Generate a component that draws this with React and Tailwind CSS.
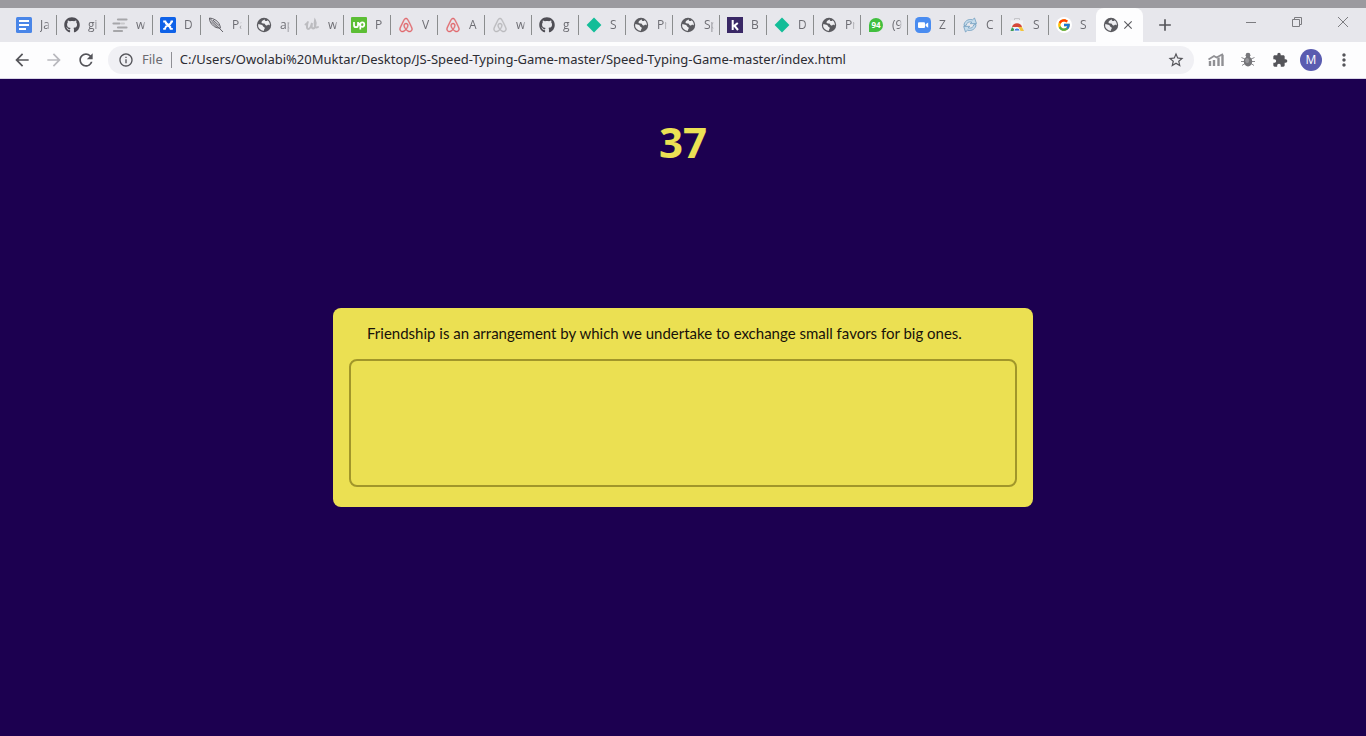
import React from "react";
import { FaAirbnb, FaGithub } from "react-icons/fa";
import { FcGoogle } from "react-icons/fc";
import {
  MdArrowBack,
  MdArrowForward,
  MdRefresh,
  MdInfoOutline,
  MdStarBorder,
  MdExtension,
  MdMoreVert,
  MdClose,
  MdAdd,
} from "react-icons/md";

function Svg({ children }) {
  return (
    <svg viewBox="0 0 16 16" className="size-4 shrink-0" aria-hidden="true">
      {children}
    </svg>
  );
}

const Docs = () => (
  <Svg>
    <rect width="16" height="16" rx="1.5" fill="#4a86e8" />
    <path d="M3 4h10M3 8h10M3 12h7" stroke="#fff" strokeWidth="1.8" />
  </Svg>
);

const Github = () => <FaGithub className="size-4 shrink-0 text-[#4f4e55]" aria-hidden="true" />;

const Bars = () => (
  <Svg>
    <path d="M6 2.500h8.500M1.500 6.500h6M6 10.500h8.500M2 14h8" stroke="#a6a6a9" strokeWidth="2.200" strokeLinecap="round" />
    <path d="M9.500 6.500h2.500" stroke="#c9c9cc" strokeWidth="2" strokeLinecap="round" />
  </Svg>
);

const Cross = () => (
  <Svg>
    <rect width="16" height="16" rx="1.5" fill="#0f62e8" />
    <path d="M3.200 4.500h2.200q.6 3.200 3 3.200 2.400 0 3-3.200H13M12.800 11.800h-2.200q-.6-3-2.800-3.200-2.200.2-2.800 3.200H3.200" fill="none" stroke="#fff" strokeWidth="1.800" />
    <path d="M5.500 5.500 10.800 10.800" stroke="#fff" strokeWidth="2.200" />
  </Svg>
);

const Quill = () => (
  <Svg>
    <path d="M1.500 1C5 1.200 9.500 3.500 11 6.500S12.500 11 12.500 11 8.500 11.500 5.500 9 1.500 4 1.500 1ZM2 1.500 15 15M3 4.500 9 10.500M5 3 11.500 9" fill="none" stroke="#55545a" strokeWidth=".9" />
  </Svg>
);

const Globe = () => (
  <Svg>
    <circle cx="8" cy="8" r="7.2" fill="#5b5b60" />
    <path
      d="M8.600 2.300C7.600 3.300 5.700 3.600 5.500 5.200 5.400 6.300 6.900 6.400 8 6.600c1.400.2 1 1.700 2.200 1.900 1 .2 1.400-.9 2.500-.7.6.1 1 .4 1.100.9a5.900 5.900 0 0 0-2.300-5.500c-.4.900-1 1-1.900.7-.7-.2-1-.7-1-1.600Z"
      fill="#eeeef1"
    />
    <path
      d="M2.100 7.200c1.500.2 2.900.1 4 .8.900.5.700 1.500 1.700 1.900.9.300 1.200.9.800 1.800-.3.700-.8.900-.8 2.200A5.900 5.900 0 0 1 2.100 7.200Z"
      fill="#eeeef1"
    />
  </Svg>
);

const Script = () => (
  <Svg>
    <path d="M1.500 7.500C3 6.500 4 5 4 4.500 3 7 2.200 12 4.200 12 6.200 12 7.500 8 8 6 7.400 9 7.500 11.500 9 11.500 11.200 11.500 12.300 6 11 3.500 10.200 7 10.500 12 14 10" fill="none" stroke="#bcbcc0" strokeWidth="2" strokeLinecap="round" />
  </Svg>
);

const Up = () => (
  <Svg>
    <rect width="16" height="16" rx="1" fill="#5cbe35" />
    <path d="M3 5v3.200q0 2 2 2t2-2V5M9.300 12.500V7.300q.2-2 2-2 2 0 2 2.300t-2 2.300q-1.300 0-2-1.100L7.500 6" fill="none" stroke="#fff" strokeWidth="1.700" />
  </Svg>
);

const Airbnb = () => (
  <FaAirbnb className="size-4 shrink-0 stroke-[#e0686d] stroke-[14px] text-[#e0686d]" aria-hidden="true" />
);
const AirbnbGrey = () => (
  <FaAirbnb className="size-4 shrink-0 stroke-[#b9b9bd] stroke-[14px] text-[#b9b9bd]" aria-hidden="true" />
);

const Diamond = () => (
  <Svg>
    <path d="M8 .6 15.400 8 8 15.400.6 8Z" fill="#13bd98" />
  </Svg>
);

const Kay = () => (
  <Svg>
    <rect width="16" height="16" fill="#3a2866" />
    <path d="M5.700 3v10M10.800 6 6.600 9.400M7.600 8.800 11 13" fill="none" stroke="#fff" strokeWidth="2" />
  </Svg>
);

const Chat = () => (
  <span className="flex size-4 shrink-0 items-center justify-center">
    <span className="flex size-[14px] items-center justify-center rounded-full rounded-bl-sm bg-[#41bf3f] text-[8px] leading-none font-bold text-white">
      94
    </span>
  </span>
);

const Camera = () => (
  <Svg>
    <rect width="16" height="16" rx="4.500" fill="#4a8cf0" />
    <rect x="3" y="5.200" width="7" height="5.800" rx="1" fill="#fff" />
    <path d="m10.600 7.300 2.600-1.800v5.200l-2.600-1.800Z" fill="#fff" />
  </Svg>
);

const Sync = () => (
  <Svg>
    <path d="M2 8.500C2 4.500 6 1.500 10.500 2.800L12.500 1l2 5.500-6.200.2 1.500-1.600C7 4.200 4.500 5.700 4.200 8.300ZM14 7.500c0 4-4 7-8.500 5.700L3.500 15 1.700 9.500l6-.2-1.500 1.600c2.800.9 5.300-.6 5.600-3.200Z" fill="#c6dcec" stroke="#6f9dbf" strokeWidth=".8" />
  </Svg>
);

const Store = () => (
  <Svg>
    <path d="M5.500 3V1.500h5V3" fill="none" stroke="#c5c5c9" />
    <path d="M2 3.500h12V14H2Z" fill="#f2f2f4" />
    <path d="M3 10a5.200 5.200 0 0 1 10 0Z" fill="#d5493a" />
    <path d="M1.500 14 3 10l4 4Z" fill="#3f9d58" />
    <path d="M9.500 14V10H13l2 4Z" fill="#f3c43b" />
    <path d="M5 14a3 3 0 0 1 6 0Z" fill="#3f7de0" stroke="#fff" strokeWidth=".8" />
  </Svg>
);

const Google = () => (
  <span className="flex size-4 shrink-0 items-center justify-center rounded-full bg-white">
    <FcGoogle className="size-[14px]" aria-hidden="true" />
  </span>
);

const wideTabs = [
  [Docs, "Ja"],
  [Github, "gi"],
  [Bars, "w"],
  [Cross, "D"],
  [Quill, "Pa"],
  [Globe, "ap"],
];

const narrowTabs = [
  [Script, "w"],
  [Up, "P"],
  [Airbnb, "V"],
  [Airbnb, "A"],
  [AirbnbGrey, "w"],
  [Github, "g"],
  [Diamond, "S"],
  [Globe, "Pr"],
  [Globe, "Sp"],
  [Kay, "B"],
  [Diamond, "D"],
  [Globe, "Pr"],
  [Chat, "(9"],
  [Camera, "Z"],
  [Sync, "C"],
  [Store, "S"],
  [Google, "S"],
];

function Tab({ icon: Icon, label, width, divider = true }) {
  return (
    <button type="button" className={`flex h-full shrink-0 items-center pl-[7px] ${width}`}>
      <Icon />
      <span className="ml-2 w-[10px] overflow-hidden text-left text-xs whitespace-nowrap text-[#6d6d73] [mask-image:linear-gradient(to_right,black_70%,transparent)]">
        {label}
      </span>
      {divider && <span className="ml-auto h-5 w-px bg-[#8b8d8e]" />}
    </button>
  );
}

function TabStrip() {
  return (
    <div className="flex h-[34px] bg-[#e7e7ec] pl-[9px]">
      {wideTabs.map(([icon, label], i) => (
        <Tab key={i} icon={icon} label={label} width="w-12" />
      ))}
      {narrowTabs.map(([icon, label], i) => (
        <Tab key={i} icon={icon} label={label} width="w-[47px]" divider={i < narrowTabs.length - 1} />
      ))}
      <div className="flex h-full w-[47px] shrink-0 items-center gap-[2px] rounded-t-lg bg-[#fdfdfe] pl-[7px] text-[#5b5b60]">
        <Globe />
        <button type="button" aria-label="Close tab">
          <MdClose className="size-[14px]" />
        </button>
      </div>
      <button type="button" aria-label="New tab" className="ml-3 text-[#55555a]">
        <MdAdd className="size-5" />
      </button>
      <div className="ml-auto flex h-7 items-center text-[#7c7c80]">
        <button type="button" aria-label="Minimize" className="flex w-[46px] justify-center">
          <svg viewBox="0 0 10 10" className="size-[10px]"><path d="M0 5.500h10" stroke="currentColor" /></svg>
        </button>
        <button type="button" aria-label="Restore" className="flex w-[46px] justify-center">
          <svg viewBox="0 0 10 10" className="size-[10px]">
            <path d="M.5 2.500h7v7h-7ZM2.500 2.500v-2h7v7h-2" fill="none" stroke="currentColor" />
          </svg>
        </button>
        <button type="button" aria-label="Close window" className="flex w-[46px] justify-center">
          <svg viewBox="0 0 10 10" className="size-[10px]"><path d="m0 0 10 10M10 0 0 10" stroke="currentColor" /></svg>
        </button>
      </div>
    </div>
  );
}

function Toolbar() {
  return (
    <div className="flex h-[37px] items-center border-b border-[#d9d5e6] bg-[#fdfdfe] pr-3 pl-3 text-[#55555a]">
      <button type="button" aria-label="Back">
        <MdArrowBack className="size-5" />
      </button>
      <button type="button" aria-label="Forward" className="ml-3 text-[#b9b9be]">
        <MdArrowForward className="size-5" />
      </button>
      <button type="button" aria-label="Reload" className="ml-3">
        <MdRefresh className="size-5" />
      </button>
      <div className="ml-3 flex h-7 flex-1 items-center rounded-full bg-[#f0f0f4] pr-[9px] pl-[10px]">
        <MdInfoOutline className="size-4 shrink-0" />
        <label htmlFor="address" className="ml-2 font-['Noto_Sans',sans-serif] text-[13px] text-[#6a6a70]">
          File
        </label>
        <span className="mx-2 h-4 w-px bg-[#8f8f95]" />
        <input
          id="address"
          type="text"
          defaultValue="C:/Users/Owolabi%20Muktar/Desktop/JS-Speed-Typing-Game-master/Speed-Typing-Game-master/index.html"
          className="min-w-0 flex-1 bg-transparent font-['Noto_Sans',sans-serif] text-[13px] text-[#2c2c33] outline-none"
        />
        <button type="button" aria-label="Bookmark this page">
          <MdStarBorder className="size-[18px]" />
        </button>
      </div>
      <div className="ml-[14px] flex items-center gap-4">
        <button type="button" aria-label="Analytics">
          <svg viewBox="0 0 16 16" className="size-4">
            <path d="M2 9v5M6 8v6M10.500 5.500V14M14.500 3v11" stroke="#909094" strokeWidth="2.400" />
            <path d="M.5 7.500 6 4l2.500 1.500L15 2" fill="none" stroke="#909094" strokeWidth="1.800" />
          </svg>
        </button>
        <button type="button" aria-label="Debugger">
          <svg viewBox="0 0 16 16" className="size-4">
            <path d="M1.500 5.500 5 7M1 9.500h14M2 13.500 5 11.500M14.500 5.500 11 7M14 13.500l-3-2" stroke="#8c8c90" />
            <circle cx="8" cy="3.200" r="2.400" fill="#77777b" />
            <ellipse cx="8" cy="9.500" rx="4.200" ry="5" fill="#747478" />
            <ellipse cx="7.200" cy="8.500" rx="2" ry="2.500" fill="#97979b" />
          </svg>
        </button>
        <button type="button" aria-label="Extensions">
          <MdExtension className="size-4" />
        </button>
      </div>
      <button
        type="button"
        aria-label="Profile"
        className="ml-3 flex size-[22px] items-center justify-center rounded-full bg-[#5a5cb0] text-xs leading-none text-white"
      >
        M
      </button>
      <button type="button" aria-label="Menu" className="ml-3">
        <MdMoreVert className="size-5" />
      </button>
    </div>
  );
}

export default function App() {
  return (
    <div className="flex min-h-screen flex-col bg-[#1c0050] font-['Open_Sans',sans-serif]">
      <header>
        <div className="h-2 bg-[#9b9a9f]" />
        <TabStrip />
        <Toolbar />
      </header>
      <main className="grid flex-1 grid-rows-[1fr_auto_1fr] justify-items-center">
        <div className="pt-9 text-[42px] leading-[54px] font-bold text-[#ebe154]">37</div>
        <section className="w-[700px] max-w-[90%] rounded-lg bg-[#ebe052] px-4 pt-4 pb-5 font-['Lato',sans-serif]">
          <label htmlFor="quote" className="mx-[18px] mb-4 block text-[15px] leading-[19px] text-[#17120a]">
            Friendship is an arrangement by which we undertake to exchange small favors for big ones.
          </label>
          <textarea
            id="quote"
            className="block h-32 w-full resize-none rounded-lg border-2 border-[#a1962a] bg-transparent px-4 py-2 outline-none"
          />
        </section>
      </main>
    </div>
  );
}
